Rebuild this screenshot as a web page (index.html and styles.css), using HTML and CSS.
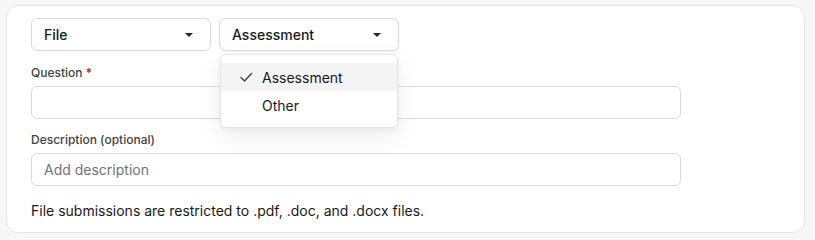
FILE: index.html
```html
<!DOCTYPE html>
<html lang="en">
<head>
    <meta charset="UTF-8" />
    <title>Question</title>
    <link rel="stylesheet" href="styles.css">
</head>
<body>
    <div class="card">
        <div class="selects">
            <div class="select">
                <span>File</span>
                <span class="caret"></span>
            </div>
            <div class="select-wrap">
                <div class="select">
                    <span>Assessment</span>
                    <span class="caret"></span>
                </div>
                <!-- Menu aberto -->
                <ul class="menu">
                    <li class="menu-item active">
                        <svg class="check" width="14" height="14" viewBox="0 0 14 14">
                            <path d="M2 7.5 L5.5 11 L12.5 3.5" fill="none" stroke="#3f3f46" stroke-width="1.4" stroke-linecap="round" stroke-linejoin="round"/>
                        </svg>
                        Assessment
                    </li>
                    <li class="menu-item">Other</li>
                </ul>
            </div>
        </div>

        <div class="field first">
            <label for="question">Question <span class="req">*</span></label>
            <input type="text" id="question" />
        </div>

        <div class="field">
            <label for="description">Description (optional)</label>
            <input type="text" id="description" placeholder="Add description" />
        </div>

        <p class="note">File submissions are restricted to .pdf, .doc, and .docx files.</p>
    </div>
</body>
</html>
```

FILE: styles.css
```css
/* Estilos gerais */
body {
    font-family: Inter, "Noto Sans", sans-serif;
    background-color: #f7f7f8;
    margin: 0;
    padding: 5px 10px 0 6px;
    color: #18181b;
}

/* Card */
.card {
    background-color: #fff;
    border: 1px solid #e4e4e7;
    border-radius: 12px;
    padding: 12px 24px 11px 24px;
}

/* Selects */
.selects {
    display: flex;
    gap: 8px;
}

.select-wrap {
    position: relative;
}

.select {
    box-sizing: border-box;
    width: 180px;
    height: 33px;
    border: 1px solid #d9d9de;
    border-radius: 6px;
    display: flex;
    align-items: center;
    justify-content: space-between;
    padding: 0 17px 0 12px;
    font-size: 14px;
    font-weight: 500;
    box-shadow: 0 1px 2px rgba(0,0,0,0.04);
}

.caret {
    width: 0;
    height: 0;
    border-left: 4px solid transparent;
    border-right: 4px solid transparent;
    border-top: 4px solid #27272a;
}

/* Menu */
.menu {
    position: absolute;
    top: 36px;
    left: 1px;
    width: 178px;
    box-sizing: border-box;
    margin: 0;
    padding: 8px 0;
    list-style: none;
    background-color: #fff;
    border: 1px solid #e4e4e7;
    border-radius: 6px;
    box-shadow: 0 8px 24px rgba(0,0,0,0.08), 0 2px 4px rgba(0,0,0,0.04);
    z-index: 2;
}

.menu-item {
    height: 28px;
    display: flex;
    align-items: center;
    padding-left: 41px;
    font-size: 14px;
    position: relative;
}

.menu-item.active {
    background-color: #f4f4f5;
}

.check {
    position: absolute;
    left: 18px;
    top: 7px;
}

/* Campos */
.field {
    margin-top: 12px;
    width: 650px;
}

.field.first {
    margin-top: 13px;
}

.field label {
    display: block;
    font-size: 12px;
    font-weight: 500;
    line-height: 18px;
    color: #3f3f46;
    margin-bottom: 4px;
}

.req {
    color: #b42318;
}

.field input {
    width: 100%;
    height: 33px;
    box-sizing: border-box;
    border: 1px solid #d9d9de;
    border-radius: 6px;
    padding: 0 12px;
    font-family: inherit;
    font-size: 14px;
    color: #18181b;
}

.field input::placeholder {
    color: #71717a;
}

.note {
    margin: 15px 0 0 0;
    font-size: 14px;
    line-height: 20px;
}
```
